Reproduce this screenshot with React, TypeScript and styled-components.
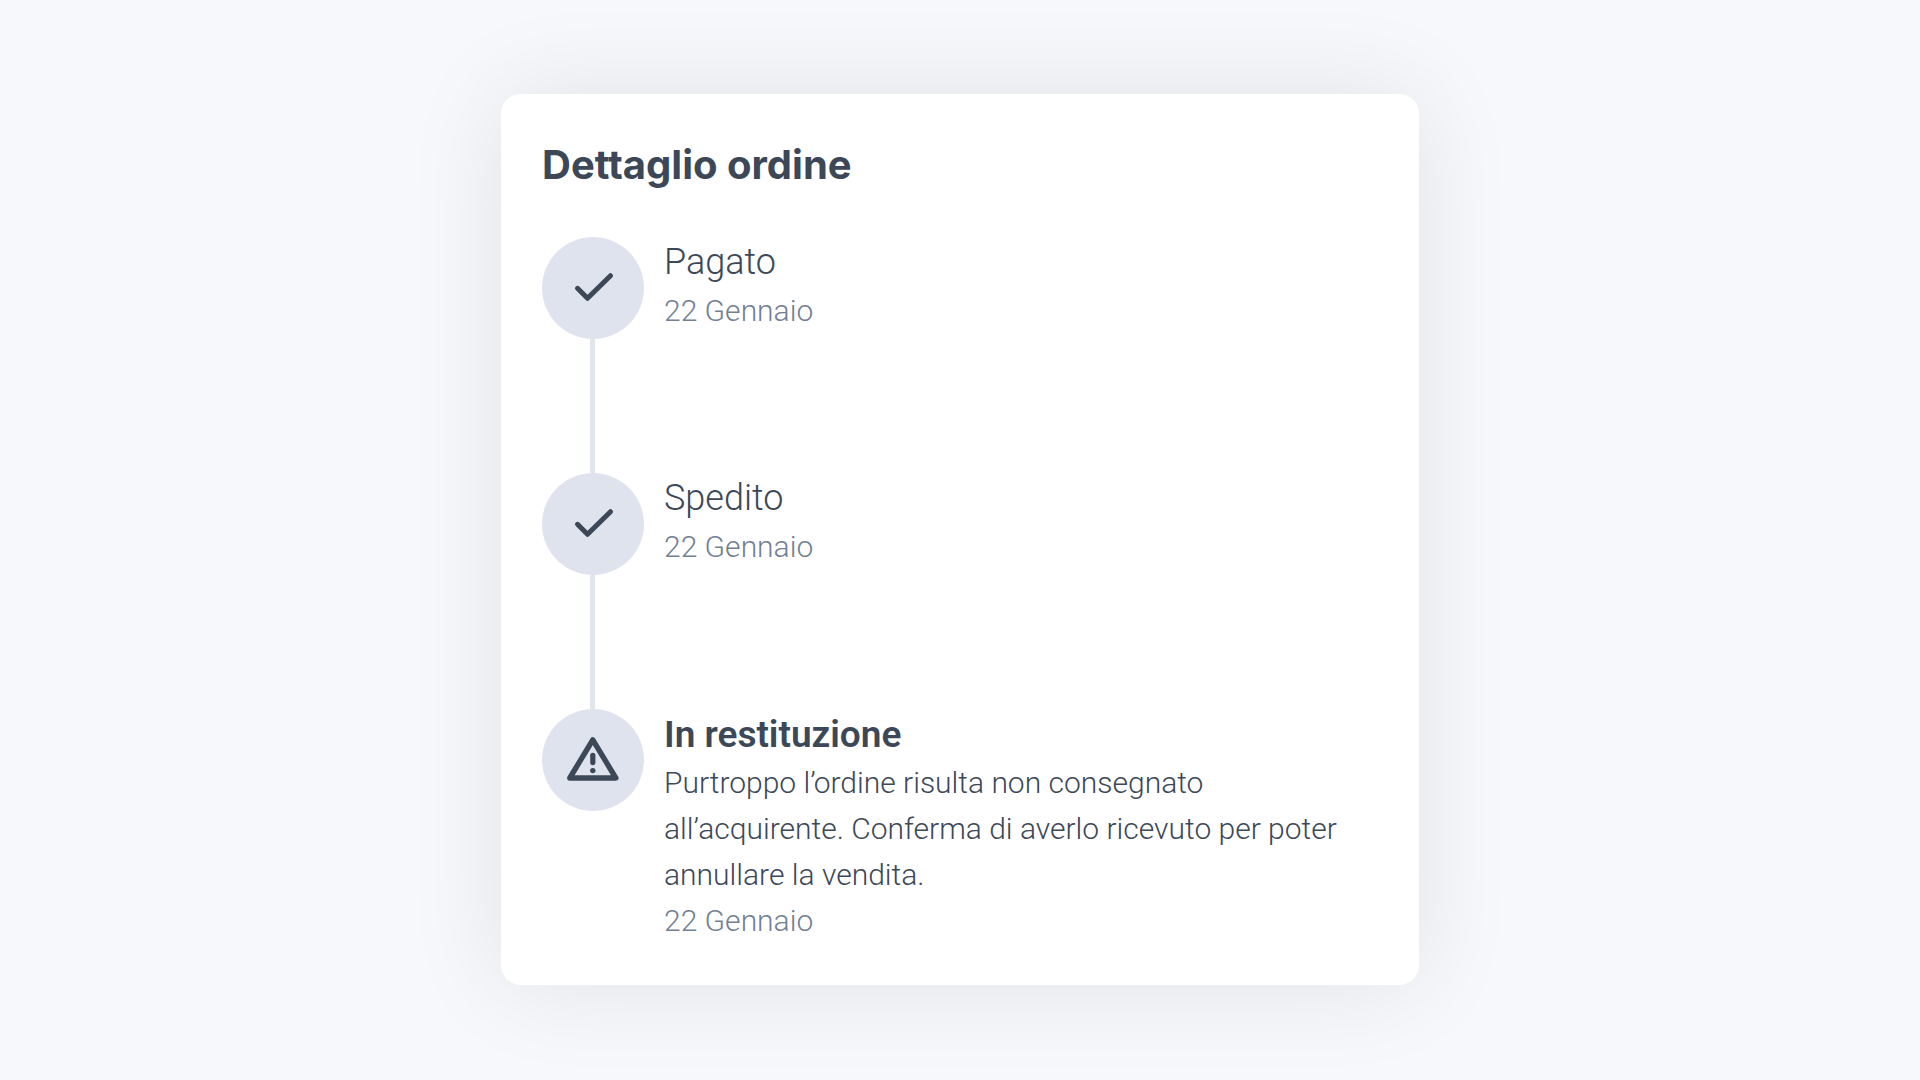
import React from "react";
import styled, { createGlobalStyle } from "styled-components";

const GlobalStyle = createGlobalStyle`
  * { box-sizing: border-box; }
  body {
    margin: 0;
    background: #f6f8fc;
    color: #3c4858;
    font-family: Roboto, "Noto Sans", sans-serif;
  }
`;

const Page = styled.main`
  min-height: 100vh;
  display: flex;
  align-items: center;
  justify-content: center;
  padding: 40px 40px 41px;
`;

const Card = styled.section`
  width: 100%;
  max-width: 918px;
  padding: 41px;
  border-radius: 20px;
  background: #ffffff;
  box-shadow: 0 0 100px rgba(0, 0, 0, 0.09);
`;

const Title = styled.h1`
  margin: 0 0 42px;
  font-family: Inter, Roboto, sans-serif;
  font-size: 40px;
  line-height: 60px;
  font-weight: 700;
`;

const Steps = styled.ol`
  margin: 0;
  padding: 0;
  list-style: none;
`;

const Step = styled.li`
  display: flex;
  gap: 20px;
`;

const Rail = styled.div`
  flex: none;
  display: flex;
  flex-direction: column;
  align-items: center;
`;

const Marker = styled.span`
  display: flex;
  align-items: center;
  justify-content: center;
  width: 102px;
  height: 102px;
  border-radius: 50%;
  background: #dfe3ee;
`;

const Connector = styled.span`
  width: 5px;
  height: 134px;
  margin-right: 1px;
  background: #e1e5ee;
`;

const Content = styled.div`
  flex: 1;
  min-width: 0;
`;

const Label = styled.h2<{ $current?: boolean }>`
  margin: 0;
  font-size: ${(p) => (p.$current ? 37 : 36)}px;
  line-height: 51px;
  font-weight: ${(p) => (p.$current ? 600 : 300)};
`;

const Text = styled.p`
  margin: 0;
  font-size: 30px;
  line-height: 46px;
  font-weight: 300;
`;

const When = styled.time`
  display: block;
  color: #718093;
  font-size: 30px;
  line-height: 46px;
  font-weight: 300;
`;

const CheckIcon = () => (
  <svg width="52" height="52" viewBox="0 0 52 52" fill="none" aria-hidden="true">
    <path d="M10.500 26.300L20.500 36.300L43.500 13.700" stroke="#3c4858" strokeWidth="5" strokeLinecap="round" strokeLinejoin="round" />
  </svg>
);

const WarningIcon = () => (
  <svg width="52" height="52" viewBox="0 0 52 52" fill="none" aria-hidden="true">
    <path d="M25.800 5.800L48.800 44H2.800Z" stroke="#3c4858" strokeWidth="5.400" strokeLinejoin="round" />
    <path d="M25.800 21.300V28.600" stroke="#3c4858" strokeWidth="5.200" strokeLinecap="round" />
    <circle cx="25.800" cy="36.600" r="2.700" fill="#3c4858" />
  </svg>
);

type StepData = { label: string; date: string; text?: string; current?: boolean };

const steps: StepData[] = [
  { label: "Pagato", date: "22 Gennaio" },
  { label: "Spedito", date: "22 Gennaio" },
  {
    label: "In restituzione",
    date: "22 Gennaio",
    text: "Purtroppo l’ordine risulta non consegnato all’acquirente. Conferma di averlo ricevuto per poter annullare la vendita.",
    current: true,
  },
];

export default function App() {
  return (
    <>
      <GlobalStyle />
      <Page lang="it">
        <Card>
          <Title>Dettaglio ordine</Title>
          <Steps>
            {steps.map((step, i) => (
              <Step key={step.label} aria-current={step.current ? "step" : undefined}>
                <Rail>
                  <Marker>{step.current ? <WarningIcon /> : <CheckIcon />}</Marker>
                  {i < steps.length - 1 && <Connector />}
                </Rail>
                <Content>
                  <Label $current={step.current}>{step.label}</Label>
                  {step.text && <Text>{step.text}</Text>}
                  <When>{step.date}</When>
                </Content>
              </Step>
            ))}
          </Steps>
        </Card>
      </Page>
    </>
  );
}
